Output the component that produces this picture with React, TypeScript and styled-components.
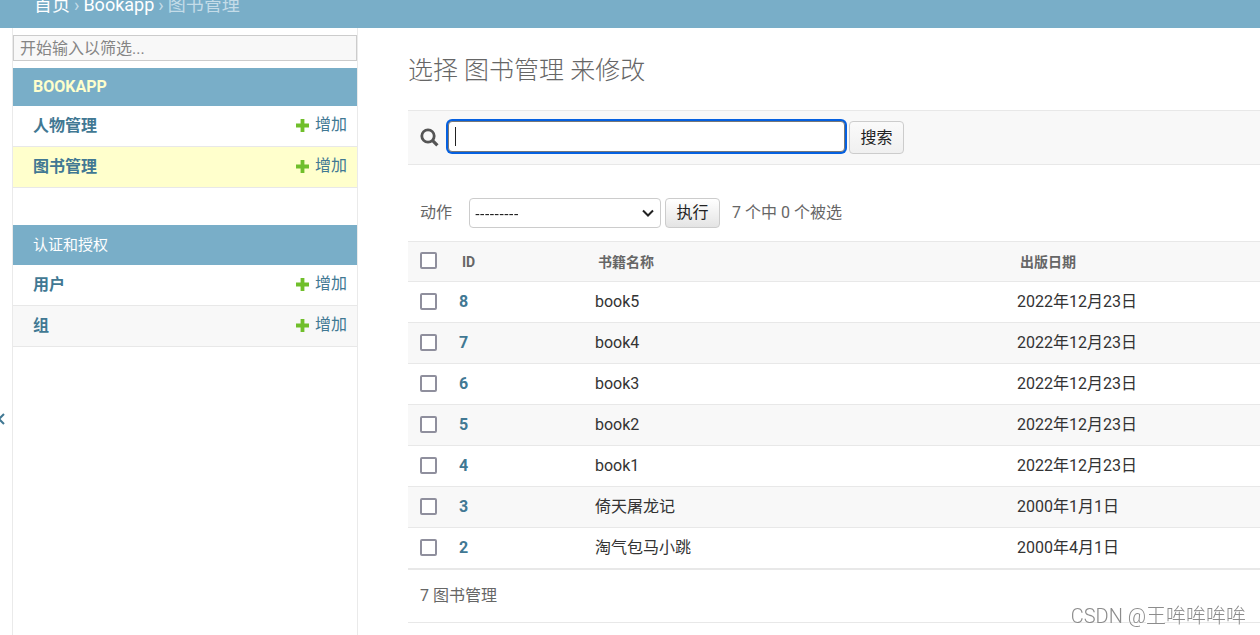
import React from 'react';
import styled, { createGlobalStyle, css } from 'styled-components';

const colors = {
  primary: '#79aec8',
  link: '#417893',
  hairline: '#e8e8e8',
  darkened: '#f8f8f8',
  quiet: '#666',
  selected: '#ffffcc',
  control: '#ccc',
};

const GlobalStyle = createGlobalStyle`
  *, *::before, *::after { box-sizing: border-box; }
  body {
    margin: 0;
    background: #fff;
    color: #333;
    font-family: Roboto, "Noto Sans CJK SC", sans-serif;
    font-size: 16px;
    line-height: 20px;
  }
  input, select, button { font: inherit; color: inherit; margin: 0; }
  a { color: ${colors.link}; text-decoration: none; }
`;

const Page = styled.div`
  display: flex;
  flex-direction: column;
  min-height: 100vh;
`;

const Breadcrumbs = styled.nav`
  display: flex;
  gap: 4px;
  margin-top: -5px;
  padding: 0 34px 13px;
  background: ${colors.primary};
  color: #c4dce8;
  font-size: 18px;
  a { color: #fff; }
`;

const Body = styled.div`
  display: flex;
  flex: 1;
`;

const Toggle = styled.button`
  flex: none;
  width: 12px;
  padding: 174px 0 0;
  border: 0;
  background: #fff;
  color: ${colors.link};
  overflow: hidden;
  svg { display: block; }
`;

const Sidebar = styled.nav`
  flex: none;
  width: 346px;
  padding-top: 7px;
  border: solid #eaeaea;
  border-width: 0 1px;
`;

const Filter = styled.input`
  display: block;
  width: 100%;
  height: 26px;
  margin-bottom: 7px;
  padding: 0 6px;
  border: 1px solid ${colors.control};
  border-radius: 0;
  background: ${colors.darkened};
  &::placeholder { color: #858585; }
`;

const AppTable = styled.table`
  width: 100%;
  margin-bottom: 37px;
  border-collapse: separate;
  border-spacing: 0;
`;

const AppCaption = styled.caption<{ $current?: boolean }>`
  padding: ${p => (p.$current ? 9 : 10)}px 20px;
  background: ${colors.primary};
  text-align: left;
  font-size: ${p => (p.$current ? 16 : 15)}px;
  a {
    color: ${p => (p.$current ? colors.selected : '#fff')};
    font-weight: ${p => (p.$current ? 700 : 400)};
  }
`;

const AppRow = styled.tr<{ $tone?: string }>`
  background: ${p => p.$tone || '#fff'};
  th, td { height: 41px; border-bottom: 1px solid ${colors.hairline}; }
  th { padding: 0 20px; text-align: left; font-weight: 700; }
  td { padding: 0 10px; text-align: right; }
`;

const AddLink = styled.a`
  display: inline-flex;
  align-items: center;
  gap: 6px;
`;

const Main = styled.main`
  flex: 1;
  min-width: 0;
  padding: 28px 0 0 50px;
`;

const Title = styled.h1`
  margin: 0 0 24px;
  color: ${colors.quiet};
  font-size: 25px;
  line-height: 30px;
  font-weight: 300;
`;

const Toolbar = styled.form`
  display: flex;
  align-items: center;
  height: 55px;
  padding-left: 12px;
  border: solid ${colors.hairline};
  border-width: 1px 0;
  background: ${colors.darkened};
  label { display: flex; width: 28px; }
`;

const SearchField = styled.span`
  position: relative;
  display: flex;
  width: 397px;
  margin: 0 4px 2px 0;
  &::after {
    content: '';
    position: absolute;
    left: 7px;
    top: 6px;
    width: 1px;
    height: 19px;
    background: #222;
  }
`;

const SearchInput = styled.input`
  width: 100%;
  height: 31px;
  padding: 0 6px;
  border: 1px solid #777;
  border-radius: 4px;
  background: #fff;
  outline: none;
  caret-color: transparent;
  box-shadow: 0 0 0 2px #0560e0;
`;

const Button = styled.button<{ $compact?: boolean }>`
  width: 55px;
  height: ${p => (p.$compact ? 30 : 33)}px;
  padding: 0;
  border: 1px solid ${colors.control};
  border-radius: 4px;
  background: linear-gradient(${p => (p.$compact ? '#fff, #e4e4e4' : '#fafafa, #f0f0f0')});
  color: #222;
  ${p => p.$compact && css`margin-left: 4px;`}
`;

const Actions = styled.form`
  display: flex;
  align-items: center;
  padding: 33px 12px 13px;
  color: ${colors.quiet};
  label { width: 49px; }
  output { margin-left: 12px; }
`;

const SelectBox = styled.span`
  position: relative;
  display: flex;
  width: 192px;
  svg {
    position: absolute;
    right: 7px;
    top: 11px;
    pointer-events: none;
  }
`;

const ActionSelect = styled.select`
  appearance: none;
  width: 100%;
  height: 30px;
  padding: 0 5px;
  border: 1px solid ${colors.control};
  border-radius: 4px;
  background: #fff;
  color: #222;
  font-family: "Noto Sans", sans-serif;
  font-size: 15px;
`;

const Results = styled.table`
  width: 100%;
  table-layout: fixed;
  border-collapse: separate;
  border-spacing: 0;
  th, td {
    height: 41px;
    padding: 0 10px;
    border-bottom: 1px solid ${colors.hairline};
    text-align: left;
    white-space: nowrap;
  }
  thead th {
    padding: 0 13px;
    border-top: 1px solid ${colors.hairline};
    background: ${colors.darkened};
    color: ${colors.quiet};
    font-size: 14px;
    font-weight: 700;
  }
  thead td {
    border-top: 1px solid ${colors.hairline};
    background: ${colors.darkened};
  }
  tbody tr:nth-child(even) { background: ${colors.darkened}; }
  tr > :first-child { padding: 0 0 2px 12px; }
`;

const Column = styled.col<{ $width?: number }>`
  width: ${p => (p.$width ? `${p.$width}px` : 'auto')};
`;

const Check = styled.input.attrs({ type: 'checkbox' })`
  appearance: none;
  display: block;
  width: 17px;
  height: 17px;
  border: 2px solid #8f8f9d;
  border-radius: 2px;
  background: #fff;
`;

const Paginator = styled.p`
  margin: 0;
  padding: 16px 12px;
  border: solid ${colors.hairline};
  border-width: 1px 0;
  color: ${colors.quiet};
`;

const Watermark = styled.div`
  position: fixed;
  right: 14px;
  bottom: 9px;
  color: #8c8c8c;
  font-size: 20px;
  font-weight: 300;
  text-shadow: -1px -1px 0 #fff;
`;

const PlusIcon = () => (
  <svg width="13" height="13" viewBox="0 0 13 13" aria-hidden="true">
    <path d="M4.6 0h3.8v4.6H13v3.8H8.4V13H4.6V8.4H0V4.6h4.6z" fill="#70bf2b" />
  </svg>
);

const SearchIcon = () => (
  <svg width="19" height="19" viewBox="0 0 19 19" fill="none" stroke="#555" aria-hidden="true">
    <circle cx="8" cy="8" r="6.2" strokeWidth="2.8" />
    <path d="M12.4 12.4l5 5" strokeWidth="3.2" />
  </svg>
);

type Model = { name: string; tone?: string };

const AppModule = ({ title, current, models }: { title: string; current?: boolean; models: Model[] }) => (
  <AppTable>
    <AppCaption $current={current}><a href="#app">{title}</a></AppCaption>
    <tbody>
      {models.map(m => (
        <AppRow key={m.name} $tone={m.tone}>
          <th scope="row"><a href="#list">{m.name}</a></th>
          <td><AddLink href="#add"><PlusIcon />增加</AddLink></td>
        </AppRow>
      ))}
    </tbody>
  </AppTable>
);

const books = [
  { id: 8, name: 'book5', date: '2022年12月23日' },
  { id: 7, name: 'book4', date: '2022年12月23日' },
  { id: 6, name: 'book3', date: '2022年12月23日' },
  { id: 5, name: 'book2', date: '2022年12月23日' },
  { id: 4, name: 'book1', date: '2022年12月23日' },
  { id: 3, name: '倚天屠龙记', date: '2000年1月1日' },
  { id: 2, name: '淘气包马小跳', date: '2000年4月1日' },
];

const IdLink = styled.a`
  font-weight: 700;
`;

export default function App() {
  return (
    <Page lang="zh-CN">
      <GlobalStyle />
      <Breadcrumbs>
        <a href="#home">首页</a>
        <span>›</span>
        <a href="#bookapp">Bookapp</a>
        <span>›</span>
        <span>图书管理</span>
      </Breadcrumbs>
      <Body>
        <Toggle type="button" aria-label="切换导航">
          <svg width="6" height="12" viewBox="0 0 6 12" fill="none" stroke="currentColor" strokeWidth="2">
            <path d="M4 1L-1 6l5 5" />
          </svg>
        </Toggle>
        <Sidebar>
          <Filter type="search" placeholder="开始输入以筛选..." aria-label="筛选导航项目" />
          <AppModule
            title="BOOKAPP"
            current
            models={[{ name: '人物管理' }, { name: '图书管理', tone: colors.selected }]}
          />
          <AppModule
            title="认证和授权"
            models={[{ name: '用户' }, { name: '组', tone: colors.darkened }]}
          />
        </Sidebar>
        <Main>
          <Title>选择 图书管理 来修改</Title>
          <Toolbar>
            <label htmlFor="searchbar"><SearchIcon /></label>
            <SearchField>
              <SearchInput id="searchbar" type="text" autoFocus aria-label="搜索" />
            </SearchField>
            <Button type="button">搜索</Button>
          </Toolbar>
          <Actions>
            <label htmlFor="action">动作</label>
            <SelectBox>
              <ActionSelect id="action">
                <option>---------</option>
              </ActionSelect>
              <svg width="12" height="9" viewBox="0 0 12 9" fill="none" stroke="#222" strokeWidth="2" aria-hidden="true">
                <path d="M1 1.5l5 5 5-5" />
              </svg>
            </SelectBox>
            <Button type="button" $compact>执行</Button>
            <output>7 个中 0 个被选</output>
          </Actions>
          <Results>
            <colgroup>
              <Column $width={41} />
              <Column $width={136} />
              <Column $width={422} />
              <Column />
            </colgroup>
            <thead>
              <tr>
                <td><Check aria-label="全选" /></td>
                <th scope="col">ID</th>
                <th scope="col">书籍名称</th>
                <th scope="col">出版日期</th>
              </tr>
            </thead>
            <tbody>
              {books.map(b => (
                <tr key={b.id}>
                  <td><Check aria-label={`选择 ${b.name}`} /></td>
                  <td><IdLink href="#change">{b.id}</IdLink></td>
                  <td>{b.name}</td>
                  <td>{b.date}</td>
                </tr>
              ))}
            </tbody>
          </Results>
          <Paginator>7 图书管理</Paginator>
        </Main>
      </Body>
      <Watermark>CSDN @王哞哞哞哞</Watermark>
    </Page>
  );
}
